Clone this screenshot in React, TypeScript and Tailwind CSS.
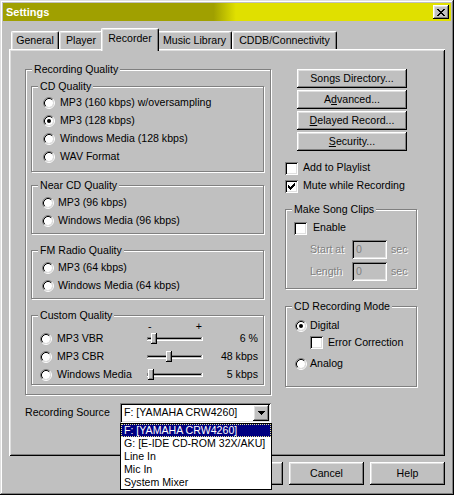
import React from 'react';

const raised =
  'shadow-[inset_-1px_-1px_#000,inset_1px_1px_#fff,inset_-2px_-2px_#808080,inset_2px_2px_#dfdfdf]';
const sunken =
  'shadow-[inset_1px_1px_#808080,inset_-1px_-1px_#fff,inset_2px_2px_#000,inset_-2px_-2px_#dfdfdf]';
const disabledText = 'text-[#808080] [text-shadow:1px_1px_0_#fff]';

function RadioIcon({ checked }: { checked?: boolean }) {
  return (
    <svg width="12" height="12" viewBox="0 0 12 12" className="shrink-0">
      <circle cx="6" cy="6" r="4" fill="#fff" />
      <path d="M2.11 9.89A5.5 5.5 0 0 1 9.89 2.11" fill="none" stroke="#808080" />
      <path d="M9.89 2.11A5.5 5.5 0 0 1 2.11 9.89" fill="none" stroke="#fff" />
      <path d="M2.82 9.18A4.5 4.5 0 0 1 9.18 2.82" fill="none" stroke="#000" />
      <path d="M9.18 2.82A4.5 4.5 0 0 1 2.82 9.18" fill="none" stroke="#dfdfdf" />
      {checked && <circle cx="6" cy="6" r="2" fill="#000" />}
    </svg>
  );
}

function CheckBox({ checked }: { checked?: boolean }) {
  return (
    <div className={`size-[13px] shrink-0 bg-white ${sunken}`}>
      {checked && (
        <svg width="13" height="13" viewBox="0 0 13 13" shapeRendering="crispEdges">
          <path
            d="M9 3h1v1h-1z M8 4h2v1h-2z M3 5h1v1h-1z M7 5h3v1h-3z M3 6h2v1h-2z M6 6h3v1h-3z M3 7h5v1h-5z M4 8h3v1h-3z M5 9h1v1h-1z"
            fill="#000"
          />
        </svg>
      )}
    </div>
  );
}

function Group({
  title,
  className,
  children,
}: {
  title: string;
  className?: string;
  children: React.ReactNode;
}) {
  return (
    <fieldset
      className={`min-w-0 border border-[#808080] shadow-[1px_1px_0_#fff,inset_1px_1px_0_#fff] ${className ?? ''}`}
    >
      <legend className="ml-[6px] bg-[#c0c0c0] px-[2px] leading-[13px]">{title}</legend>
      {children}
    </fieldset>
  );
}

function Radio({
  label,
  checked,
  gap,
}: {
  label: string;
  checked?: boolean;
  gap: string;
}) {
  return (
    <div className={`flex h-[18px] items-center ${gap}`}>
      <RadioIcon checked={checked} />
      <span className="whitespace-nowrap">{label}</span>
    </div>
  );
}

function Slider({ pos }: { pos: number }) {
  return (
    <svg width="56" height="12" viewBox="0 0 56 12" shapeRendering="crispEdges" className="shrink-0">
      <rect x="0" y="4" width="55" height="1" fill="#808080" />
      <rect x="0" y="4" width="1" height="4" fill="#808080" />
      <rect x="1" y="5" width="53" height="1" fill="#000" />
      <rect x="0" y="7" width="56" height="1" fill="#fff" />
      <rect x="55" y="4" width="1" height="4" fill="#fff" />
      <rect x={pos} y="0" width="6" height="11" fill="#c0c0c0" />
      <rect x={pos} y="0" width="5" height="1" fill="#fff" />
      <rect x={pos} y="0" width="1" height="10" fill="#fff" />
      <rect x={pos + 4} y="1" width="1" height="9" fill="#808080" />
      <rect x={pos + 1} y="9" width="4" height="1" fill="#808080" />
      <rect x={pos + 5} y="0" width="1" height="11" fill="#000" />
      <rect x={pos} y="10" width="6" height="1" fill="#000" />
    </svg>
  );
}

function Button({ children, className }: { children: React.ReactNode; className?: string }) {
  return (
    <div className={`flex items-center justify-center bg-[#c0c0c0] ${raised} ${className ?? ''}`}>
      {children}
    </div>
  );
}

const tabs = [
  { label: 'General', w: 'w-[48px]' },
  { label: 'Player', w: 'w-[44px]' },
  { label: 'Recorder', w: 'w-[58px]', active: true },
  { label: 'Music Library', w: 'w-[75px]' },
  { label: 'CDDB/Connectivity', w: 'w-[105px]' },
];

const sources = [
  'F: [YAMAHA CRW4260]',
  'G: [E-IDE CD-ROM 32X/AKU]',
  'Line In',
  'Mic In',
  'System Mixer',
];

const custom = [
  { label: 'MP3 VBR', pos: 4, value: '6 %' },
  { label: 'MP3 CBR', pos: 19, value: '48 kbps' },
  { label: 'Windows Media', pos: 1, value: '5 kbps' },
];

export default function App() {
  return (
    <div
      className={`flex h-[495px] w-[454px] flex-col bg-[#c0c0c0] px-[3px] pt-[3px] font-['Liberation_Sans',Arial,sans-serif] text-[10.6px] text-black ${'shadow-[inset_-1px_-1px_#000,inset_1px_1px_#dfdfdf,inset_-2px_-2px_#808080,inset_2px_2px_#fff]'}`}
    >
      {/* Title bar */}
      <div className="flex h-[18px] items-center justify-between bg-[linear-gradient(90deg,#a0a000_47%,#e0e000_52%)] pl-[3px] pr-[2px]">
        <span className="text-[11px] font-bold text-white">Settings</span>
        <Button className="h-[14px] w-[16px]">
          <svg width="8" height="7" viewBox="0 0 8 7" shapeRendering="crispEdges">
            <path
              d="M0 0h2v1h-2z M6 0h2v1h-2z M1 1h2v1h-2z M5 1h2v1h-2z M2 2h4v1h-4z M3 3h2v1h-2z M2 4h4v1h-4z M1 5h2v1h-2z M5 5h2v1h-2z M0 6h2v1h-2z M6 6h2v1h-2z"
              fill="#000"
            />
          </svg>
        </Button>
      </div>

      {/* Tabs */}
      <div className="ml-[8px] mt-[7px] flex h-[21px] items-end">
        {tabs.map((t) =>
          t.active ? (
            <div
              key={t.label}
              className={`relative z-10 -mx-[2px] -mb-[2px] flex h-[23px] items-center justify-center rounded-t-[2px] border-l border-r border-t border-white border-r-black bg-[#c0c0c0] pb-[3px] shadow-[inset_-1px_0_#808080,inset_1px_1px_#dfdfdf] ${t.w}`}
            >
              {t.label}
            </div>
          ) : (
            <div
              key={t.label}
              className={`flex h-[18px] items-center justify-center rounded-t-[2px] border-l border-r border-t border-white border-r-black shadow-[inset_-1px_0_#808080,inset_1px_1px_#dfdfdf] ${t.w}`}
            >
              {t.label}
            </div>
          ),
        )}
      </div>

      {/* Panel */}
      <div className="ml-[6px] flex h-[407px] w-[436px] pl-[16px] pt-[14px] shadow-[inset_1px_1px_#fff,inset_-1px_-1px_#000,inset_2px_2px_#dfdfdf,inset_-2px_-2px_#808080]">
        {/* Left column */}
        <div className="flex w-[246px] flex-col">
          <Group title="Recording Quality">
            <div className="pb-[9px] pl-[5px] pr-[6px] pt-[4px]">
              <Group title="CD Quality">
                <div className="pb-[5px] pl-[11px] pt-[1px]">
                  <Radio gap="gap-[5px]" label="MP3 (160 kbps) w/oversampling" />
                  <Radio gap="gap-[5px]" label="MP3 (128 kbps)" checked />
                  <Radio gap="gap-[5px]" label="Windows Media (128 kbps)" />
                  <Radio gap="gap-[5px]" label="WAV Format" />
                </div>
              </Group>
              <Group title="Near CD Quality" className="mt-[7px]">
                <div className="pb-[3px] pl-[10px] pt-[2px]">
                  <Radio gap="gap-[4px]" label="MP3 (96 kbps)" />
                  <Radio gap="gap-[4px]" label="Windows Media (96 kbps)" />
                </div>
              </Group>
              <Group title="FM Radio Quality" className="mt-[10px]">
                <div className="pb-[3px] pl-[10px] pt-[2px]">
                  <Radio gap="gap-[4px]" label="MP3 (64 kbps)" />
                  <Radio gap="gap-[4px]" label="Windows Media (64 kbps)" />
                </div>
              </Group>
              <Group title="Custom Quality" className="mt-[10px]">
                <div className="pl-[8px] pr-[5px]">
                  <div className="flex h-[8px]">
                    <div className="w-[107px]" />
                    <div className="flex w-[56px] justify-between px-[1px] leading-[8px]">
                      <span>-</span>
                      <span>+</span>
                    </div>
                  </div>
                  {custom.map((c) => (
                    <div key={c.label} className="flex h-[18px] items-center">
                      <div className="flex w-[107px] items-center gap-[5px]">
                        <RadioIcon />
                        <span>{c.label}</span>
                      </div>
                      <Slider pos={c.pos} />
                      <span className="flex-1 text-right">{c.value}</span>
                    </div>
                  ))}
                </div>
              </Group>
            </div>
          </Group>

          {/* Recording source */}
          <div className="mt-[8px] flex items-center">
            <span className="w-[96px]">Recording Source</span>
            <div className="relative">
              <div className={`flex h-[20px] w-[151px] items-center bg-white pl-[4px] pr-[2px] ${sunken}`}>
                <span className="flex-1 whitespace-nowrap">F: [YAMAHA CRW4260]</span>
                <Button className="h-[16px] w-[16px]">
                  <svg width="7" height="4" viewBox="0 0 7 4" shapeRendering="crispEdges">
                    <path d="M0 0h7v1h-7z M1 1h5v1h-5z M2 2h3v1h-3z M3 3h1v1h-1z" fill="#000" />
                  </svg>
                </Button>
              </div>
              <div className="absolute left-0 top-[20px] z-20 w-[152px] border border-black bg-white">
                {sources.map((s, i) => (
                  <div
                    key={s}
                    className={`flex h-[13px] items-center whitespace-nowrap pl-[3px] ${
                      i === 0
                        ? 'bg-[#000080] text-white outline-1 -outline-offset-1 outline-dotted outline-[#e8e890]'
                        : ''
                    }`}
                  >
                    {s}
                  </div>
                ))}
              </div>
            </div>
          </div>
        </div>

        {/* Right column */}
        <div className="ml-[14px] flex w-[132px] flex-col pt-[6px]">
          <div className="ml-[12px] flex w-[110px] flex-col gap-[2px]">
            <Button className="h-[19px]">Songs Directory...</Button>
            <Button className="h-[19px]">
              <span>
                A<span className="underline">d</span>vanced...
              </span>
            </Button>
            <Button className="h-[19px]">
              <span>
                <span className="underline">D</span>elayed Record...
              </span>
            </Button>
            <Button className="h-[19px]">
              <span>
                <span className="underline">S</span>ecurity...
              </span>
            </Button>
          </div>

          <div className="mt-[8px] flex flex-col">
            <div className="flex h-[18px] items-center gap-[5px]">
              <CheckBox />
              <span>Add to Playlist</span>
            </div>
            <div className="flex h-[18px] items-center gap-[5px]">
              <CheckBox checked />
              <span className="whitespace-nowrap">Mute while Recording</span>
            </div>
          </div>

          <Group title="Make Song Clips" className="mt-[8px]">
            <div className="pb-[7px] pl-[8px] pt-[3px]">
              <div className="flex h-[18px] items-center gap-[6px]">
                <CheckBox />
                <span>Enable</span>
              </div>
              <div className="mt-[3px] flex h-[19px] items-center">
                <span className={`ml-[16px] w-[42px] ${disabledText}`}>Start at</span>
                <div className={`flex h-[19px] w-[35px] items-center bg-[#c0c0c0] pl-[4px] text-[#808080] ${sunken}`}>0</div>
                <span className={`ml-[4px] ${disabledText}`}>sec</span>
              </div>
              <div className="mt-[3px] flex h-[19px] items-center">
                <span className={`ml-[16px] w-[42px] ${disabledText}`}>Length</span>
                <div className={`flex h-[19px] w-[35px] items-center bg-[#c0c0c0] pl-[4px] text-[#808080] ${sunken}`}>0</div>
                <span className={`ml-[4px] ${disabledText}`}>sec</span>
              </div>
            </div>
          </Group>

          <Group title="CD Recording Mode" className="mt-[11px]">
            <div className="pb-[13px] pl-[9px] pt-[4px]">
              <div className="flex h-[17px] items-center gap-[3px]">
                <RadioIcon checked />
                <span>Digital</span>
              </div>
              <div className="ml-[15px] flex h-[17px] items-center gap-[5px]">
                <CheckBox />
                <span className="whitespace-nowrap">Error Correction</span>
              </div>
              <div className="mt-[4px] flex h-[18px] items-center gap-[3px]">
                <RadioIcon />
                <span>Analog</span>
              </div>
            </div>
          </Group>
        </div>
      </div>

      {/* Dialog buttons */}
      <div className="ml-[6px] mt-[6px] flex w-[436px] justify-end gap-[6px]">
        <Button className="h-[23px] w-[75px]">OK</Button>
        <Button className="h-[23px] w-[75px]">Cancel</Button>
        <Button className="h-[23px] w-[75px]">Help</Button>
      </div>
    </div>
  );
}
